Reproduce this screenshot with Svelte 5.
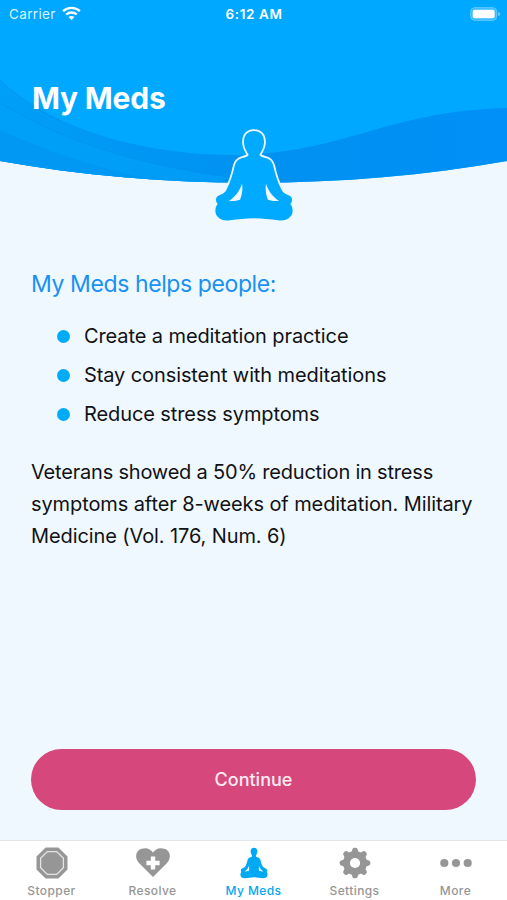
<script>
  let active = "My Meds";
  const tabs = ["Stopper", "Resolve", "My Meds", "Settings", "More"];
  const benefits = [
    "Create a meditation practice",
    "Stay consistent with meditations",
    "Reduce stress symptoms",
  ];
</script>

<div class="screen">
  <header>
    <svg class="waves" viewBox="0 0 507 190" aria-hidden="true">
      <defs>
        <linearGradient id="band" x1="0" x2="1">
          <stop offset="0" stop-color="#009ff8" />
          <stop offset="0.3" stop-color="#0096f3" />
          <stop offset="0.55" stop-color="#0091f1" />
          <stop offset="1" stop-color="#0090f7" />
        </linearGradient>
        <clipPath id="edge">
          <path d="M0 0H507V161C345 190 160 190 0 161Z" />
        </clipPath>
      </defs>
      <g clip-path="url(#edge)">
        <path d="M0 0H507V190H0Z" fill="#00a9ff" />
        <path d="M0 80C65 139 165 155 236 155C345 153 386 111 507 108V190H0Z" fill="url(#band)" />
        <path d="M0 103C38 124 96 159 228 177L210 190H0Z" fill="#00a2f8" opacity="0.6" />
        <path d="M0 80C20 99 40 111 60 121M0 103C38 124 96 159 228 177" fill="none" stroke="#008eea" stroke-width="1" opacity="0.45" />
        <path d="M0 130C48 151 94 168 160 181L0 190Z" fill="#0095f0" opacity="0.75" />
      </g>
    </svg>

    <div class="status">
      <div class="carrier">
        <span>Carrier</span>
        <svg width="19" height="15" viewBox="0 0 19 15" fill="none" stroke="#fff" stroke-width="2.3">
          <path d="M1.1 5.2C5.8 .8 13.2 .8 17.9 5.2" />
          <path d="M4.2 8.5C7.2 5.8 11.8 5.8 14.8 8.5" />
          <path d="M6.5 11.1C8.2 9.5 10.8 9.5 12.5 11.1L9.5 14Z" fill="#fff" stroke="none" />
        </svg>
      </div>
      <span class="time">6:12 AM</span>
      <svg class="battery" width="31" height="14" viewBox="0 0 31 14">
        <rect x=".7" y=".7" width="26" height="12.6" rx="4" fill="#34baff" stroke="#69ccff" />
        <rect x="2.7" y="2.7" width="22" height="8.6" rx="2" fill="#fff" />
        <path d="M28.4 5C30.4 5.5 30.4 8.5 28.4 9Z" fill="#8bd7ff" />
      </svg>
    </div>

    <h1>My Meds</h1>

    <svg class="figure" width="84" height="98" viewBox="37 33 252 294" aria-hidden="true">
      <path
        class="body"
        d="M163 48C183 48 194 61 193 84C192 99 186 108 179 119C181 125 188 126 198 129C212 133 218 141 221 153C226 177 234 202 246 225C252 236 261 238 270 242C279 247 279 259 272 267C281 277 281 295 273 304C265 315 250 318 235 316C210 313 190 310 163 310C136 310 116 313 91 316C76 318 61 315 53 304C45 295 45 277 54 267C47 259 47 247 56 242C65 238 74 236 80 225C92 202 100 177 105 153C108 141 114 133 128 129C138 126 145 125 147 119C140 108 134 99 133 84C132 61 143 48 163 48Z"
      />
      <path d="M127 206C130 225 126 243 121 254C110 258 98 258 88 258C105 246 119 230 127 206Z" fill="#f0f8ff" />
      <path d="M199 206C196 225 200 243 205 254C216 258 228 258 238 258C221 246 207 230 199 206Z" fill="#f0f8ff" />
    </svg>
  </header>

  <main>
    <h2>My Meds helps people:</h2>
    <ul>
      {#each benefits as benefit}
        <li><i></i><span>{benefit}</span></li>
      {/each}
    </ul>
    <p>
      <span class="first">Veterans showed a 50% reduction in stress</span><br />
      symptoms after 8-weeks of meditation. Military<br />
      Medicine (Vol. 176, Num. 6)
    </p>
    <button class="continue">Continue</button>
  </main>

  <nav>
    {#each tabs as tab}
      <button class="tab" class:active={active === tab} on:click={() => (active = tab)}>
        <svg width="36" height="32" viewBox="0 0 36 32" fill="currentColor">
          {#if tab === "Stopper"}
            <path d="M11.6 .5H24.4L33.5 9.6V22.4L24.4 31.5H11.6L2.5 22.4V9.6Z" />
            <path d="M13.3 4.6H22.7L29.4 11.3V20.7L22.7 27.4H13.3L6.6 20.7V11.3Z" fill="none" stroke="#e4e4e4" stroke-width="1.3" />
          {:else if tab === "Resolve"}
            <path d="M18 30L4 16C-1 10 1 3.5 6.5 1.8C11.5 .2 15.5 1.8 18 5.5C20.5 1.8 24.5 .2 29.5 1.8C35 3.5 37 10 32 16Z" />
            <path d="M15.8 9.4H20.2V13.8H24.6V18.2H20.2V22.6H15.8V18.2H11.4V13.8H15.8Z" fill="#fff" />
          {:else if tab === "My Meds"}
            <path
              fill-rule="evenodd"
              d="M18 .7C21 .7 22.1 3.2 21 6.2C20.4 7.7 19.8 8.5 20 9.5C20.4 10.5 23.6 10.2 24.3 12.5C25.3 17 26.4 19.6 28.2 20.8C30.6 21.5 31.8 23 30.7 25C32.3 27 31.7 30 29.6 30.8C26.2 32 22 30.2 18 30.2C14 30.2 9.8 32 6.4 30.8C4.3 30 3.7 27 5.3 25C4.2 23 5.4 21.5 7.8 20.8C9.6 19.6 10.7 17 11.7 12.5C12.4 10.2 15.6 10.5 16 9.5C16.2 8.5 15.6 7.7 15 6.2C13.9 3.2 15 .7 18 .7ZM12.7 19.2C12.2 21 11.1 22.8 8.5 24.4L12.6 23.9C13.5 22.5 13.3 20.9 12.7 19.2ZM23.3 19.2C22.7 20.9 22.5 22.5 23.4 23.9L27.5 24.4C24.9 22.8 23.8 21 23.3 19.2Z"
            />
          {:else if tab === "Settings"}
            <g>
              {#each [0, 45, 90, 135, 180, 225, 270, 315] as angle}
                <path d="M14 7L15.5 2Q16 .7 17.2 .7H18.8Q20 .7 20.5 2L22 7Z" transform="rotate({angle} 18 16)" />
              {/each}
              <circle cx="18" cy="16" r="12" />
              <circle cx="18" cy="16" r="5.1" fill="#fff" />
            </g>
          {:else}
            <circle cx="6.3" cy="16" r="4.1" />
            <circle cx="18" cy="16" r="4.1" />
            <circle cx="29.7" cy="16" r="4.1" />
          {/if}
        </svg>
        <span>{tab}</span>
      </button>
    {/each}
  </nav>
</div>

<style>
  :global(body) {
    margin: 0;
  }

  .screen {
    width: 507px;
    height: 900px;
    display: flex;
    flex-direction: column;
    background: #f0f8ff;
    color: #101214;
    font-family: Inter, "Liberation Sans", sans-serif;
    overflow: hidden;
  }

  header {
    position: relative;
    height: 226px;
    flex: none;
    color: #fff;
  }

  .waves {
    position: absolute;
    top: 0;
    left: 0;
    width: 507px;
    height: 190px;
  }

  .status {
    position: relative;
    display: grid;
    grid-template-columns: 1fr auto 1fr;
    align-items: center;
    height: 27px;
    padding: 0 6px 0 9px;
    font-size: 13.5px;
  }

  .carrier {
    display: flex;
    align-items: center;
    gap: 6px;
    letter-spacing: 0.35px;
    color: #d9f2ff;
  }

  .time {
    margin-left: -2px;
    font-weight: 600;
    letter-spacing: 0.6px;
  }

  .battery {
    justify-self: end;
  }

  h1 {
    position: relative;
    margin: 52px 0 0 32px;
    font-size: 30px;
    line-height: 38px;
    font-weight: 700;
    letter-spacing: -0.2px;
  }

  /* the figure hangs over the lower edge of the waves */
  .figure {
    position: absolute;
    left: 212px;
    top: 126px;
  }

  .body {
    fill: #00abff;
    stroke: #f0f8ff;
    stroke-width: 11;
    paint-order: stroke;
  }

  main {
    flex: 1;
    display: flex;
    flex-direction: column;
    padding: 43px 31px 30px;
  }

  h2 {
    margin: 0;
    font-size: 23px;
    line-height: 30px;
    font-weight: 400;
    letter-spacing: -0.4px;
    color: #1991f2;
  }

  ul {
    list-style: none;
    margin: 18px 0 0;
    padding: 0 0 0 26px;
  }

  li {
    display: flex;
    align-items: center;
    gap: 14px;
    height: 39px;
    font-size: 20px;
    letter-spacing: -0.1px;
  }

  li span {
    margin-top: -1px;
  }

  i {
    width: 13px;
    height: 13px;
    border-radius: 50%;
    background: #00abfa;
  }

  p {
    margin: 22px 0 0;
    font-size: 20px;
    line-height: 32px;
    letter-spacing: -0.1px;
    white-space: nowrap;
  }

  .first {
    letter-spacing: -0.2px;
  }

  .continue {
    height: 61px;
    margin-top: auto;
    border-radius: 31px;
    background: #d6487b;
    color: #ffeaf3;
    font-size: 18px;
    font-weight: 500;
  }

  button {
    border: none;
    padding: 0;
    font-family: inherit;
    cursor: pointer;
  }

  nav {
    height: 60px;
    flex: none;
    display: grid;
    grid-template-columns: repeat(5, 101px);
    justify-content: center;
    box-sizing: border-box;
    border-top: 1px solid #e3e7eb;
    background: #fff;
  }

  .tab {
    display: flex;
    flex-direction: column;
    align-items: center;
    padding-top: 6px;
    background: none;
    color: #969696;
    font-size: 12px;
    line-height: 16px;
    font-weight: 500;
    letter-spacing: 0.4px;
  }

  .tab span {
    margin-top: 4px;
  }

  .tab.active {
    color: #00a9f4;
  }
</style>
